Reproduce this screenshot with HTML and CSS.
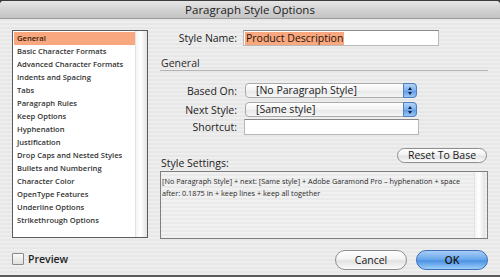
FILE: index.html
```html
<!DOCTYPE html>
<html lang="en">
<head>
    <meta charset="UTF-8">
    <title>Paragraph Style Options</title>
    <link rel="stylesheet" href="styles.css">
</head>
<body>
    <div class="window">
        <div class="titlebar">Paragraph Style Options</div>

        <div class="content">
            <!-- category list on the left -->
            <div class="sidebar">
                <div class="listbox">
                    <ul class="categories">
                        <li class="selected">General</li>
                        <li>Basic Character Formats</li>
                        <li>Advanced Character Formats</li>
                        <li>Indents and Spacing</li>
                        <li>Tabs</li>
                        <li>Paragraph Rules</li>
                        <li>Keep Options</li>
                        <li>Hyphenation</li>
                        <li>Justification</li>
                        <li>Drop Caps and Nested Styles</li>
                        <li>Bullets and Numbering</li>
                        <li>Character Color</li>
                        <li>OpenType Features</li>
                        <li>Underline Options</li>
                        <li>Strikethrough Options</li>
                    </ul>
                    <div class="scrollbar"></div>
                </div>
                <div class="preview"><span class="checkbox"></span>Preview</div>
            </div>

            <!-- general panel -->
            <div class="panel">
                <div class="field">
                    <span class="label">Style Name:</span>
                    <div class="textbox name-box"><span class="highlight">Product Description</span></div>
                </div>

                <div class="section-title">General</div>

                <div class="field based-on">
                    <span class="label">Based On:</span>
                    <div class="popup">[No Paragraph Style]<span class="arrows"></span></div>
                </div>
                <div class="field next-style">
                    <span class="label">Next Style:</span>
                    <div class="popup">[Same style]<span class="arrows"></span></div>
                </div>
                <div class="field shortcut">
                    <span class="label">Shortcut:</span>
                    <div class="textbox short-box"></div>
                </div>

                <div class="settings-head">
                    <span class="settings-label">Style Settings:</span>
                    <button class="pill reset">Reset To Base</button>
                </div>
                <div class="settings-box">
                    <p>[No Paragraph Style] + next: [Same style] + Adobe Garamond Pro &ndash; hyphenation + space after: 0.1875 in + keep lines + keep all together</p>
                    <div class="scrollbar"></div>
                </div>

                <div class="actions">
                    <button class="pill">Cancel</button>
                    <button class="pill default">OK</button>
                </div>
            </div>
        </div>
    </div>
</body>
</html>
```

FILE: styles.css
```css
body {
    margin: 0;
    padding: 0;
    background: #3a3a3a;
    font-family: "Open Sans", "DejaVu Sans", sans-serif;
    color: #1a1a1a;
}

.window {
    width: 500px;
    height: 274px;
    margin-top: 1px;
    background: repeating-linear-gradient(to bottom, #eeeeee 0, #eeeeee 2px, #e7e7e7 2px, #e7e7e7 4px);
    border-bottom: 2px solid #5a5a5a;
    border-radius: 4px 4px 0 0;
    overflow: hidden;
}

.titlebar {
    height: 17px;
    line-height: 17px;
    text-align: center;
    font-size: 11.5px;
    color: #222;
    background: linear-gradient(to bottom, #e6e6e6, #cfcfcf 60%, #c4c4c4);
    border-bottom: 1px solid #9a9a9a;
}

.content {
    display: flex;
    padding: 11px 12px 0 12px;
}

/* left column */
.sidebar {
    width: 136px;
}

.listbox {
    position: relative;
    height: 206px;
    border: 1px solid #5c5c5c;
    background: #fff;
}

.categories {
    list-style: none;
    margin: 1px 0 0 1px;
    padding: 0;
    width: 121px;
}

.categories li {
    height: 13px;
    line-height: 13px;
    padding-left: 3px;
    font-size: 7.6px;
    font-weight: 600;
    color: #333;
    white-space: nowrap;
}

.categories li.selected {
    background: #f8a77f;
    color: #3a1a0a;
}

.scrollbar {
    position: absolute;
    top: 0;
    right: 0;
    bottom: 0;
    width: 11px;
    border-left: 1px solid #e2e2e2;
    background: linear-gradient(to right, #f4f4f4, #ffffff 40%, #e3e3e3);
}

.preview {
    display: flex;
    align-items: center;
    margin-top: 14px;
    font-size: 10.5px;
    font-weight: 600;
    color: #222;
}

.checkbox {
    width: 10px;
    height: 10px;
    margin-right: 4px;
    border: 1px solid #8a8a8a;
    border-radius: 1px;
    background: linear-gradient(to bottom, #fafafa, #e0e0e0);
}

/* right column */
.panel {
    width: 328px;
    margin-left: 12px;
}

.field {
    display: flex;
    align-items: center;
    height: 16px;
}

.label {
    width: 77px;
    text-align: right;
    font-size: 10.5px;
    color: #222;
    margin-right: 6px;
}

.textbox {
    height: 14px;
    background: #fff;
    border: 1px solid #b8b8b8;
    border-top-color: #888;
}

.name-box {
    width: 193px;
    padding-left: 1px;
    display: flex;
    align-items: center;
}

.highlight {
    background: #f8a77f;
    font-size: 10.5px;
    line-height: 13px;
    padding: 0 1px;
    color: #2a1408;
}

.section-title {
    margin-top: 11px;
    padding-left: 1px;
    height: 13px;
    line-height: 13px;
    font-size: 10.5px;
    color: #2a2a2a;
    border-bottom: 1px solid #b4b4b4;
}

.based-on {
    margin-top: 12px;
    height: 15px;
}

.next-style {
    margin-top: 4px;
    height: 15px;
}

.shortcut {
    margin-top: 2px;
}

.short-box {
    width: 173px;
    margin-left: 1px;
}

.popup {
    position: relative;
    width: 160px;
    height: 13px;
    line-height: 13px;
    margin-left: 2px;
    padding-left: 10px;
    font-size: 10.5px;
    color: #222;
    border: 1px solid #a9a9a9;
    border-radius: 4px;
    background: linear-gradient(to bottom, #ffffff, #f2f2f2 50%, #e6e6e6 51%, #f7f7f7);
}

.arrows {
    position: absolute;
    top: -1px;
    right: -1px;
    width: 14px;
    height: 15px;
    border-radius: 0 4px 4px 0;
    border: 1px solid #4f7fbd;
    box-sizing: border-box;
    background: linear-gradient(to bottom, #b4d4f7, #7ab0ee 50%, #5a98e4 51%, #9cc8f8);
}

.arrows::before,
.arrows::after {
    content: "";
    position: absolute;
    left: 4px;
    border-left: 2px solid transparent;
    border-right: 2px solid transparent;
}

.arrows::before {
    top: 3px;
    border-bottom: 3px solid #10203a;
}

.arrows::after {
    top: 8px;
    border-top: 3px solid #10203a;
}

.settings-head {
    display: flex;
    justify-content: space-between;
    align-items: flex-end;
    margin-top: 13px;
}

.settings-label {
    font-size: 10.5px;
    padding-left: 1px;
    margin-bottom: -7px;
    color: #222;
}

.pill {
    font-family: "Open Sans", "DejaVu Sans", sans-serif;
    font-size: 10.5px;
    color: #1a1a1a;
    height: 20px;
    padding: 0;
    border: 1px solid #8e8e8e;
    border-radius: 10px;
    background: linear-gradient(to bottom, #ffffff, #f3f3f3 45%, #e2e2e2 55%, #fbfbfb);
}

.reset {
    width: 90px;
    height: 15px;
    line-height: 13px;
    margin-right: 1px;
}

.settings-box {
    position: relative;
    height: 66px;
    margin-top: 8px;
    border: 1px solid #7e7e7e;
    background: repeating-linear-gradient(to bottom, #f1f1f1 0, #f1f1f1 2px, #eaeaea 2px, #eaeaea 4px);
}

.settings-box p {
    margin: 0;
    padding: 3px 16px 0 1px;
    font-size: 7.3px;
    line-height: 12px;
    color: #2a2a2a;
}

.settings-box .scrollbar {
    right: 2px;
    width: 10px;
}

.actions {
    display: flex;
    justify-content: flex-end;
    gap: 9px;
    margin-top: 11px;
}

.actions .pill {
    width: 72px;
}

.pill.default {
    border-color: #3c6fb8;
    font-weight: 600;
    background: linear-gradient(to bottom, #a7cdf6, #6caaec 45%, #4c92e4 55%, #9ed0fa);
}
```
